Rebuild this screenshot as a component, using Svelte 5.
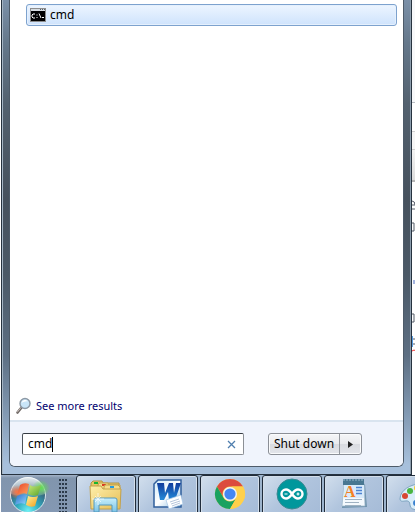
<script>
  // Start menu in search mode, sitting on top of the taskbar.
  let query = $state('cmd');

  const apps = [
    { id: 'explorer', label: 'Windows Explorer' },
    { id: 'word', label: 'Microsoft Word' },
    { id: 'chrome', label: 'Google Chrome' },
    { id: 'arduino', label: 'Arduino' },
    { id: 'wordpad', label: 'WordPad' },
    { id: 'paint', label: 'Paint' },
  ];
</script>

<div class="screen">
  <div class="desktop">
    <section class="menu" aria-label="Start menu">
      <div class="panel">
        <div class="results">
          <button class="result">
            <svg width="16" height="14" viewBox="0 0 16 14" aria-hidden="true">
              <rect width="16" height="14" fill="#8d8d8d" />
              <rect x="1" y="1" width="14" height="2" fill="#d5dbe0" />
              <path d="M10 1h1v1h-1zM12 1h1v1h-1zM14 1h1v1h-1z" fill="#59626c" />
              <rect x="1" y="3" width="14" height="10" fill="#000" />
              <path d="M5 6H3L2 7v2l1 1h2M7 6.5v1M7 9v1M9 5.5l2 4.5M12 9.5h2" fill="none" stroke="#fff" />
            </svg>
            <span>cmd</span>
          </button>
        </div>

        <a class="more" href="#results">
          <svg width="16" height="18" viewBox="0 0 16 18" aria-hidden="true">
            <path d="M5.5 10.5L1.5 15.5" stroke="#6f6865" stroke-width="2.6" stroke-linecap="round" />
            <path d="M5 10.5L1.4 15" stroke="#c6bcb7" stroke-width="1" stroke-linecap="round" />
            <circle cx="9" cy="6.5" r="5" fill="#c9e5f8" stroke="#8d99a5" stroke-width="1.4" />
            <path d="M5.6 6a3.6 3.6 0 0 1 6.5-1.5C9.5 4 7.5 5 5.6 6z" fill="#fff" />
          </svg>
          <span>See more results</span>
        </a>

        <div class="footer">
          <div class="search">
            <input type="text" aria-label="Search programs and files" bind:value={query} />
            <span class="caret"></span>
            <button class="clear" aria-label="Clear search" onclick={() => (query = '')}>
              <svg width="9" height="9" viewBox="0 0 9 9" aria-hidden="true">
                <path d="M1 1l7 7M8 1l-7 7" stroke="#4f7eae" stroke-width="1.3" />
              </svg>
            </button>
          </div>
          <div class="power">
            <button class="shutdown">Shut down</button>
            <button class="options" aria-label="Shut down options">
              <svg width="5" height="7" viewBox="0 0 5 7" aria-hidden="true">
                <path d="M0 0l5 3.5L0 7z" fill="#222" />
              </svg>
            </button>
          </div>
        </div>
      </div>
    </section>

    <!-- Sliver of the document window behind the menu. -->
    <div class="behind" aria-hidden="true">
      <div class="ribbon"></div>
      <div class="tools"></div>
      <svg class="words" width="4" height="184" viewBox="0 0 4 184">
        <path d="M0 19q3 0 3 4H0M0 27h3M0 41h2v8H0M0 132h2v8H0M0 157h4M0 162h3" fill="none" stroke="#555c68" />
        <path d="M2 98v4" stroke="#486ac2" />
        <path d="M0 154h1v11H0z" fill="#579ce0" />
        <path d="M0 169l2-1 2 1" fill="none" stroke="#e33" />
      </svg>
    </div>
  </div>

  <nav class="taskbar" aria-label="Taskbar">
    <button class="start" aria-label="Start">
      <svg width="54" height="37" viewBox="0 0 54 37" aria-hidden="true">
        <defs>
          <radialGradient id="orb" cx="0.5" cy="0.95" r="0.95">
            <stop offset="0" stop-color="#6ff0f4" />
            <stop offset="0.35" stop-color="#2fa9bd" />
            <stop offset="0.7" stop-color="#39627c" />
            <stop offset="1" stop-color="#9db4c2" />
          </radialGradient>
          <linearGradient id="shine" x2="0" y2="1">
            <stop offset="0" stop-color="#fff" stop-opacity="0.75" />
            <stop offset="1" stop-color="#fff" stop-opacity="0.15" />
          </linearGradient>
          <radialGradient id="glow">
            <stop offset="0" stop-color="#5fdd50" />
            <stop offset="1" stop-color="#5fdd50" stop-opacity="0" />
          </radialGradient>
          <radialGradient id="warm">
            <stop offset="0" stop-color="#ff7440" />
            <stop offset="1" stop-color="#ff7440" stop-opacity="0" />
          </radialGradient>
          <linearGradient id="red" x2="1" y2="1"><stop stop-color="#e9442a" /><stop offset="1" stop-color="#ffa55e" /></linearGradient>
          <linearGradient id="green" x2="1" y2="1"><stop stop-color="#c9e978" /><stop offset="1" stop-color="#5aa52b" /></linearGradient>
          <linearGradient id="blue" x2="1" y2="1"><stop stop-color="#2f6fca" /><stop offset="1" stop-color="#8fd8ff" /></linearGradient>
          <linearGradient id="gold" x2="1" y2="1"><stop stop-color="#fff39a" /><stop offset="1" stop-color="#f29d1c" /></linearGradient>
        </defs>
        <circle cx="27" cy="20" r="17.5" fill="url(#orb)" stroke="#dbe6ec" />
        <path d="M10 19a17 17 0 0 1 34 0q-17 6-34 0z" fill="url(#shine)" />
        <ellipse cx="40" cy="13" rx="9" ry="8" fill="url(#glow)" />
        <ellipse cx="16" cy="17" rx="8" ry="7" fill="url(#warm)" />
        <path d="M19 10q4-3 9-1l-2 10q-4-2-10 1z" fill="url(#red)" />
        <path d="M29 10q4 3 11 0l-3 10q-5 2-10-1z" fill="url(#green)" />
        <path d="M16 21q5-3 10-1l-2 9q-5-2-10 1z" fill="url(#blue)" />
        <path d="M27 21q5 2 10 0l-3 10q-4 2-9-1z" fill="url(#gold)" />
      </svg>
    </button>
    <div class="grip"></div>

    <div class="apps">
      {#each apps as app (app.id)}
        <button class="app" aria-label={app.label}>
          {#if app.id === 'explorer'}
            <svg width="34" height="34" viewBox="0 0 34 34" aria-hidden="true">
              <defs>
                <linearGradient id="folder" x2="1" y2="1"><stop stop-color="#fff0ac" /><stop offset="1" stop-color="#e5bd55" /></linearGradient>
                <linearGradient id="stand" x2="0" y2="1"><stop stop-color="#c7eefb" /><stop offset="1" stop-color="#7cc4e6" /></linearGradient>
              </defs>
              <path d="M2 5l2-2h9l1 2h16v7H2z" fill="#e6c665" stroke="#b39445" />
              <path d="M5 4h4v2H5z" fill="#18b531" />
              <path d="M9 7l1-2h9l1 2h11v7H9z" fill="#f4dc89" stroke="#c2a14c" />
              <path d="M13 6h4v2h-4z" fill="#da3b24" />
              <path d="M15 9l1-2h13l2 2v6H15z" fill="#f5dd8a" stroke="#c2a14c" />
              <path d="M21 8h4v2h-4z" fill="#259bdc" />
              <path d="M1 8h11l2 3h18l-1 20H2z" fill="url(#folder)" stroke="#c2a14c" />
              <path d="M5 34V22q0-2 2-2h19q2 0 2 2v12h-5v-7H10v7z" fill="url(#stand)" stroke="#5598bd" />
              <path d="M9 15v12M3 21h12M6 18l6 6M12 18l-6 6" stroke="#fff" stroke-width="0.8" opacity="0.8" />
            </svg>
          {:else if app.id === 'word'}
            <svg width="32" height="32" viewBox="0 0 32 32" aria-hidden="true">
              <defs>
                <linearGradient id="sheet" x2="1" y2="1"><stop stop-color="#d0ebfa" /><stop offset="0.5" stop-color="#fff" /><stop offset="1" stop-color="#83b8df" /></linearGradient>
                <linearGradient id="wmark" x2="0" y2="1"><stop stop-color="#103c9c" /><stop offset="1" stop-color="#2489d8" /></linearGradient>
              </defs>
              <path d="M6 2h23v27H2V6z" fill="url(#sheet)" stroke="#315f9c" stroke-width="1.5" />
              <path d="M5 5h7l1 10 4-10h4l1 10 2-10h5l-6 17h-6l-1-8-4 8H8z" fill="url(#wmark)" />
              <path d="M14 22l15-5 2 9-14 5z" fill="#fff" stroke="#a5c5e5" stroke-width="0.7" />
              <path d="M18 24l9-3M19 26l9-3M20 28l8-3" stroke="#a3b8d3" stroke-width="0.8" />
            </svg>
          {:else if app.id === 'chrome'}
            <svg width="32" height="32" viewBox="0 0 32 32" aria-hidden="true">
              <circle cx="16" cy="16" r="15" fill="#ffd04b" />
              <path d="M3 8.5A15 15 0 0 1 29 8.5H16A7.5 7.5 0 0 0 9.5 19.7z" fill="#dc4b3e" />
              <path d="M3 8.5l6.5 11.2a7.5 7.5 0 0 0 13 0L16 31A15 15 0 0 1 3 8.5z" fill="#19a260" />
              <path d="M16 8.5h13A15 15 0 0 1 16 31l6.5-11.3A7.5 7.5 0 0 0 16 8.5z" fill="#ffd04b" />
              <circle cx="16" cy="16" r="7" fill="#f4f4f4" />
              <circle cx="16" cy="16" r="5.6" fill="#4587f3" />
            </svg>
          {:else if app.id === 'arduino'}
            <svg width="32" height="32" viewBox="0 0 32 32" aria-hidden="true">
              <circle cx="16" cy="16" r="15" fill="#00979c" stroke="#3a8991" />
              <path d="M16 16q-3-4.500-6-4.500a4.500 4.500 0 0 0 0 9q3 0 6-4.500t6-4.500a4.500 4.500 0 0 1 0 9q-3 0-6-4.500z" fill="none" stroke="#fff" stroke-width="2.4" />
              <path d="M8.500 16h3M20.500 16h3M22 14.500v3" stroke="#fff" stroke-width="1.2" />
            </svg>
          {:else if app.id === 'wordpad'}
            <svg width="32" height="32" viewBox="0 0 32 32" aria-hidden="true">
              <path d="M6 7l21-1 2 23-25 1z" fill="#7194ae" />
              <path d="M6 5h20l1 23H4z" fill="#f4f9fd" stroke="#9db7ca" stroke-width="0.7" />
              <path d="M5 1h21v6H5z" fill="#497792" />
              <path d="M6 1v2M9 1v2M12 1v2M15 1v2M18 1v2M21 1v2M24 1v2" stroke="#9abacc" />
              <path d="M6 7h20v13H6z" fill="#d9ebfb" />
              <text class="pad-letter" x="6" y="19">A</text>
              <path d="M18 9.5h6M18 12.5h6M18 15.5h6" stroke="#4d83d2" stroke-width="1.3" />
              <path d="M7 21.5h17M7 24.5h14M7 27.5h16" stroke="#9fb2c3" />
            </svg>
          {:else}
            <svg width="34" height="34" viewBox="0 0 34 34" aria-hidden="true">
              <path d="M21 6C12 6 1 12 1 21q0 3 5 2t5 4q0 5 9 5c9 0 13-6 13-14S29 6 21 6z" fill="#d9edf9" stroke="#7fa5c1" />
              <circle cx="6" cy="18" r="3" fill="#d84733" />
              <circle cx="11" cy="13" r="3" fill="#49b541" />
              <circle cx="18" cy="10" r="3" fill="#f4c82b" />
              <circle cx="17" cy="25" r="3" fill="#3780cf" />
            </svg>
          {/if}
        </button>
      {/each}
    </div>
  </nav>
</div>

<style>
  :global(body) {
    margin: 0;
    background: #fff;
  }

  .screen {
    display: flex;
    flex-direction: column;
    height: 100vh;
    overflow: hidden;
    font: 12px/16px 'Noto Sans', 'Open Sans', sans-serif;
    color: #000;
  }

  button {
    padding: 0;
    border: 0;
    background: none;
    font: inherit;
    color: inherit;
  }

  svg {
    display: block;
    flex: none;
  }

  .desktop {
    display: flex;
    flex: 1;
    min-height: 0;
    padding-left: 1px;
  }

  .menu {
    display: flex;
    flex: 1;
    box-sizing: border-box;
    padding: 0 7px 7px;
    border: solid #26323f;
    border-width: 0 1px 1px;
    background: linear-gradient(#7b90a8, #65788b 9%, #53616f 22%, #46515d 42%, #4b5967 58%, #5d6f83 75%, #7e95ae 86%, #a7c0dc 98%);
    box-shadow: inset 1px 0 #a5b5c4, inset -1px 0 #8b9cac;
  }

  .panel {
    display: flex;
    flex: 1;
    flex-direction: column;
    border: solid #4e5b69;
    border-width: 0 1px 1px;
    border-radius: 0 0 6px 6px;
    background: #fff;
    overflow: hidden;
  }

  .results {
    flex: 1;
    padding: 4px 6px 0 16px;
  }

  .result {
    display: flex;
    align-items: center;
    gap: 4px;
    width: 100%;
    height: 22px;
    padding: 0 3px;
    border: 1px solid #7da2ce;
    border-radius: 3px;
    background: linear-gradient(#edf5ff, #cfe3fc);
    box-shadow: inset 0 0 0 1px #e5f0fd;
    text-align: left;
  }

  .more {
    display: flex;
    align-items: center;
    gap: 4px;
    height: 28px;
    padding: 0 6px;
    font-size: 11px;
    color: #00006f;
    text-decoration: none;
  }

  .footer {
    display: flex;
    gap: 24px;
    padding: 11px 12px;
    border-top: 2px solid #d9e4ef;
    background: #f0f4fc;
  }

  .search {
    position: relative;
    display: flex;
    flex: 0 1 222px;
    box-sizing: border-box;
    height: 22px;
    border: 1px solid #8b8f95;
    border-top-color: #343a41;
    border-left-color: #4d535a;
    border-radius: 2px;
    background: #fff;
  }

  .search input {
    flex: 1;
    min-width: 0;
    padding: 0 5px;
    border: 0;
    outline: 0;
    background: none;
    font: inherit;
  }

  .caret {
    position: absolute;
    top: 3px;
    left: 29px;
    width: 1px;
    height: 15px;
    background: #000;
  }

  .clear {
    display: flex;
    align-items: center;
    justify-content: center;
    width: 24px;
  }

  .power {
    display: flex;
    box-sizing: border-box;
    height: 22px;
    border: 1px solid #8b8f96;
    border-radius: 3px;
    background: linear-gradient(#f5f6f8, #e9eaed 48%, #d9dbe0 52%, #e3e5ea);
    box-shadow: inset 0 0 0 1px #fafbfc;
  }

  .shutdown {
    width: 70px;
    white-space: nowrap;
  }

  .options {
    display: flex;
    align-items: center;
    justify-content: center;
    width: 22px;
    border-left: 1px solid #92969c;
  }

  .behind {
    flex: 0 0 3px;
    overflow: hidden;
    background: #fff;
  }

  .ribbon {
    height: 102px;
    border-bottom: 1px solid #b9bec4;
    background: #f7f8fa;
  }

  .tools {
    box-sizing: border-box;
    height: 79px;
    border-bottom: 2px solid #b6b6b6;
    background: linear-gradient(#fff 28px, #d0d0d0 28px, #d0d0d0 29px, #f6f6f6 29px, #f6f6f6 46px, #d0d0d0 46px, #d0d0d0 47px, #f3f3f3 47px, #ddd);
  }

  .taskbar {
    display: flex;
    flex: 0 0 37px;
    margin-left: 1px;
    background: linear-gradient(#a3b3c8, #8195ad 3px, #8498b3);
    overflow: hidden;
  }

  .start {
    width: 54px;
    height: 37px;
  }

  .grip {
    width: 9px;
    margin: 4px 8px 0 4px;
    background: radial-gradient(circle at 1px 1px, #2c3a4a 1px, transparent 1px) 0 0 / 3px 4px;
  }

  .apps {
    display: flex;
    flex: 1;
    gap: 2px;
    background: #9db4cd;
    overflow: hidden;
  }

  .app {
    display: flex;
    flex: 0 0 60px;
    justify-content: center;
    box-sizing: border-box;
    height: 41px;
    padding-top: 2px;
    border: 1px solid #202c3b;
    border-radius: 3px;
    background: linear-gradient(135deg, #d2dfed, #b1c5de 45%, #a5bbd7);
    box-shadow: inset 0 0 0 1px #d3deea;
  }

  .pad-letter {
    font: bold 16px 'Liberation Serif', serif;
    fill: #f38124;
  }
</style>
